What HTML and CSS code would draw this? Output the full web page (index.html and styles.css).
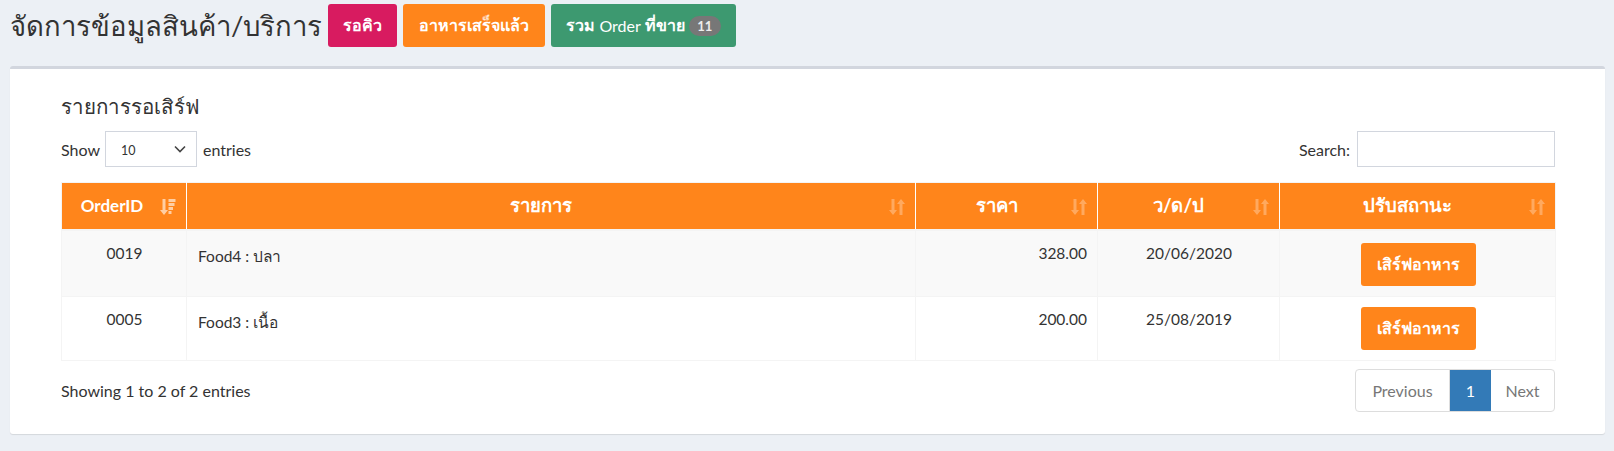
FILE: index.html
```html
<!DOCTYPE html>
<html lang="th">
<head>
<meta charset="utf-8">
<title>จัดการข้อมูลสินค้า/บริการ</title>
<link rel="stylesheet" href="styles.css">
</head>
<body>
<header class="page-head">
  <h1 class="page-title">จัดการข้อมูลสินค้า/บริการ</h1>
  <a class="btn btn-maroon">รอคิว</a>
  <a class="btn btn-orange">อาหารเสร็จแล้ว</a>
  <a class="btn btn-olive">รวม <span class="latin">Order</span> ที่ขาย <span class="badge">11</span></a>
</header>

<section class="card">
  <h3 class="card-title">รายการรอเสิร์ฟ</h3>
  <div class="controls">
    <label class="length">Show
      <span class="select"><span class="select-val">10</span>
        <svg class="chev" viewBox="0 0 12 8" width="12" height="8"><path d="M1 1.5 L6 6.5 L11 1.5" fill="none" stroke="#444" stroke-width="1.6"/></svg>
      </span>
      entries</label>
    <label class="search">Search: <span class="input"></span></label>
  </div>

  <table class="grid">
    <colgroup>
      <col class="c1"><col class="c2"><col class="c3"><col class="c4"><col class="c5">
    </colgroup>
    <thead>
      <tr>
        <th class="th-id">OrderID
          <svg class="sort" viewBox="0 0 16 18" width="16" height="18"><path d="M2.5 1 h3 v11 h2.5 l-4 5 l-4 -5 h2.5z" fill="#fff" opacity=".6"/><path d="M8.5 1h7v3h-7zM8.5 5h6v3h-6zM8.5 9h4.5v3h-4.5zM8.5 13h3v3h-3z" fill="#fff" opacity=".6"/></svg>
        </th>
        <th>รายการ
          <svg class="sort" viewBox="0 0 16 18" width="16" height="18"><path d="M2.5 1 h3 v11 h2.5 l-4 5 l-4 -5 h2.5z" fill="#fff" opacity=".3"/><path d="M10.5 17 h3 v-11 h2.5 l-4 -5 l-4 5 h2.5z" fill="#fff" opacity=".3"/></svg>
        </th>
        <th>ราคา
          <svg class="sort" viewBox="0 0 16 18" width="16" height="18"><path d="M2.5 1 h3 v11 h2.5 l-4 5 l-4 -5 h2.5z" fill="#fff" opacity=".3"/><path d="M10.5 17 h3 v-11 h2.5 l-4 -5 l-4 5 h2.5z" fill="#fff" opacity=".3"/></svg>
        </th>
        <th>ว/ด/ป
          <svg class="sort" viewBox="0 0 16 18" width="16" height="18"><path d="M2.5 1 h3 v11 h2.5 l-4 5 l-4 -5 h2.5z" fill="#fff" opacity=".3"/><path d="M10.5 17 h3 v-11 h2.5 l-4 -5 l-4 5 h2.5z" fill="#fff" opacity=".3"/></svg>
        </th>
        <th>ปรับสถานะ
          <svg class="sort" viewBox="0 0 16 18" width="16" height="18"><path d="M2.5 1 h3 v11 h2.5 l-4 5 l-4 -5 h2.5z" fill="#fff" opacity=".3"/><path d="M10.5 17 h3 v-11 h2.5 l-4 -5 l-4 5 h2.5z" fill="#fff" opacity=".3"/></svg>
        </th>
      </tr>
    </thead>
    <tbody>
      <tr class="odd">
        <td class="center">0019</td>
        <td>Food4 : ปลา</td>
        <td class="right">328.00</td>
        <td class="center">20/06/2020</td>
        <td class="center"><a class="btn btn-orange btn-serve">เสิร์ฟอาหาร</a></td>
      </tr>
      <tr>
        <td class="center">0005</td>
        <td>Food3 : เนื้อ</td>
        <td class="right">200.00</td>
        <td class="center">25/08/2019</td>
        <td class="center"><a class="btn btn-orange btn-serve">เสิร์ฟอาหาร</a></td>
      </tr>
    </tbody>
  </table>

  <div class="footer">
    <div class="info">Showing 1 to 2 of 2 entries</div>
    <nav class="pager">
      <a class="pg pg-prev">Previous</a>
      <a class="pg pg-active">1</a>
      <a class="pg pg-next">Next</a>
    </nav>
  </div>
</section>
</body>
</html>
```

FILE: styles.css
```css
* { box-sizing: border-box; }
html, body { margin: 0; padding: 0; }
body {
  background: #ecf0f5;
  color: #333;
  font-family: "Lato", "Noto Sans", sans-serif;
  font-size: 14px;
  width: 1614px;
  height: 451px;
  overflow: hidden;
}

.page-head {
  display: flex;
  align-items: center;
  gap: 6px;
  height: 51px;
  padding: 4px 10px 4px 10px;
}
.page-title {
  margin: 0;
  font-size: 27.5px;
  font-weight: 400;
  color: #333;
  line-height: 1;
}
.btn {
  display: inline-flex;
  align-items: center;
  justify-content: center;
  height: 43px;
  padding: 0 15px;
  border-radius: 3px;
  color: #fff;
  font-size: 16px;
  font-weight: 700;
  text-decoration: none;
  white-space: nowrap;
}
.btn-maroon { background: #d81b60; }
.btn-orange { background: #ff851b; padding: 0 16px; }
.btn-olive { background: #3d9970; gap: 4px; }
.btn-olive .latin { font-weight: 400; font-size: 16px; }
.btn-olive .badge {
  display: inline-flex;
  align-items: center;
  justify-content: center;
  min-width: 32px;
  height: 20px;
  padding: 0 7px;
  border-radius: 10px;
  background: #777;
  color: #eee;
  font-size: 13px;
  font-weight: 700;
}

.card {
  margin: 15px 9px 0 10px;
  height: 368px;
  background: #fff;
  border-top: 3px solid #d2d6de;
  border-radius: 3px;
  box-shadow: 0 1px 1px rgba(0,0,0,.1);
  padding: 25px 50px 0 51px;
}
.card-title {
  margin: 0;
  font-size: 20.5px;
  font-weight: 400;
  line-height: 24px;
  color: #333;
}
.controls {
  display: flex;
  justify-content: space-between;
  align-items: center;
  margin-top: 13px;
  height: 36px;
  font-size: 16px;
}
.length, .search {
  display: flex;
  align-items: center;
  gap: 5px;
  font-weight: 400;
  color: #333;
}
.select {
  display: inline-flex;
  align-items: center;
  justify-content: space-between;
  width: 92px;
  height: 36px;
  border: 1px solid #d2d6de;
  padding: 0 10px 0 15px;
  font-size: 12.5px;
  margin-right: 1px;
}
.select-val { padding-top: 2px; }
.input {
  display: inline-block;
  width: 198px;
  height: 36px;
  border: 1px solid #d2d6de;
  margin-left: 2px;
}

.grid {
  margin-top: 15px;
  width: 100%;
  border-collapse: collapse;
  border: 1px solid #f4f4f4;
  table-layout: fixed;
}
.c1 { width: 125px; }
.c2 { width: 729px; }
.c3 { width: 182px; }
.c4 { width: 182px; }
.c5 { width: 276px; }
.grid th {
  position: relative;
  height: 47px;
  background: #ff851b;
  color: #fff;
  font-weight: 700;
  font-size: 18.5px;
  text-align: center;
  padding: 0 30px 0 10px;
  border-right: 1px solid #fff;
  border-bottom: 2px solid #f4f4f4;
}
.grid th.th-id { font-size: 17px; padding-right: 34px; }
.grid th:last-child { border-right: 0; }
.sort {
  position: absolute;
  right: 10px;
  top: 15px;
}
.grid td {
  vertical-align: top;
  padding: 13px 10px 10px 11px;
  border-right: 1px solid #f4f4f4;
  border-top: 1px solid #f4f4f4;
  height: 63px;
  font-size: 15.5px;
}
.grid tr.odd td { background: #f9f9f9; height: 66px; }
.grid td.center { text-align: center; }
.grid td.right { text-align: right; }
.grid td:has(.btn-serve) { padding-top: 10px; }
.grid tr.odd td:has(.btn-serve) { padding-top: 12px; }
.btn-serve {
  width: 115px;
  padding: 0;
}

.footer {
  display: flex;
  justify-content: space-between;
  align-items: center;
  margin-top: 8px;
}
.info { font-size: 16px; color: #333; }
.pager {
  display: flex;
  height: 43px;
  border: 1px solid #ddd;
  border-radius: 4px;
  overflow: hidden;
}
.pg {
  display: flex;
  align-items: center;
  justify-content: center;
  color: #777;
  font-size: 16px;
}
.pg-prev { width: 94px; border-right: 1px solid #ddd; }
.pg-active { width: 41px; background: #337ab7; color: #fff; }
.pg-next { width: 63px; }
```
